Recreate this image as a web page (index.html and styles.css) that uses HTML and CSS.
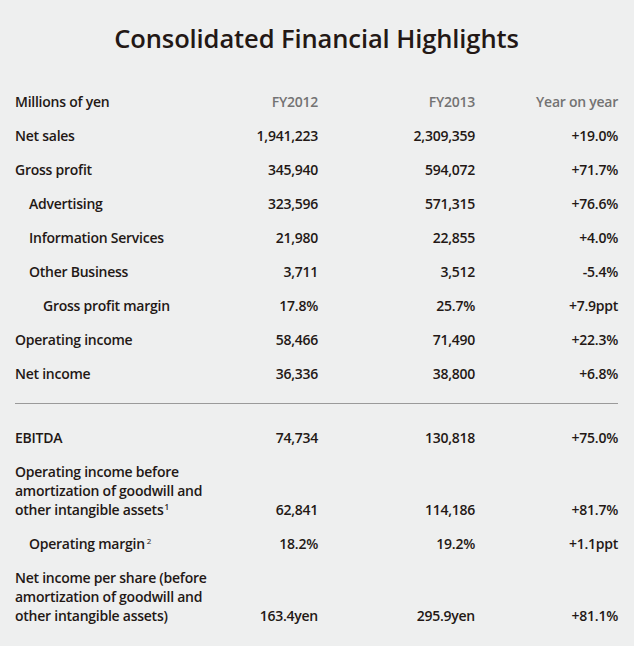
FILE: index.html
```html
<!DOCTYPE html>
<html lang="en">
<head>
<meta charset="utf-8">
<title>Consolidated Financial Highlights</title>
<link rel="stylesheet" href="styles.css">
</head>
<body>
<main class="page">
  <h1 class="title">Consolidated Financial Highlights</h1>
  <div class="table">
    <div class="row head">
      <div class="label">Millions of yen</div>
      <div class="num">FY2012</div>
      <div class="num">FY2013</div>
      <div class="num">Year on year</div>
    </div>
    <div class="row">
      <div class="label">Net sales</div>
      <div class="num">1,941,223</div>
      <div class="num">2,309,359</div>
      <div class="num">+19.0%</div>
    </div>
    <div class="row">
      <div class="label">Gross profit</div>
      <div class="num">345,940</div>
      <div class="num">594,072</div>
      <div class="num">+71.7%</div>
    </div>
    <div class="row">
      <div class="label indent1">Advertising</div>
      <div class="num">323,596</div>
      <div class="num">571,315</div>
      <div class="num">+76.6%</div>
    </div>
    <div class="row">
      <div class="label indent1">Information Services</div>
      <div class="num">21,980</div>
      <div class="num">22,855</div>
      <div class="num">+4.0%</div>
    </div>
    <div class="row">
      <div class="label indent1">Other Business</div>
      <div class="num">3,711</div>
      <div class="num">3,512</div>
      <div class="num">-5.4%</div>
    </div>
    <div class="row">
      <div class="label indent2">Gross profit margin</div>
      <div class="num">17.8%</div>
      <div class="num">25.7%</div>
      <div class="num">+7.9ppt</div>
    </div>
    <div class="row">
      <div class="label">Operating income</div>
      <div class="num">58,466</div>
      <div class="num">71,490</div>
      <div class="num">+22.3%</div>
    </div>
    <div class="row">
      <div class="label">Net income</div>
      <div class="num">36,336</div>
      <div class="num">38,800</div>
      <div class="num">+6.8%</div>
    </div>
    <hr class="divider">
    <div class="row">
      <div class="label">EBITDA</div>
      <div class="num">74,734</div>
      <div class="num">130,818</div>
      <div class="num">+75.0%</div>
    </div>
    <div class="row">
      <div class="label">Operating income before<br>amortization of goodwill and<br>other intangible assets<sup class="note">1</sup></div>
      <div class="num">62,841</div>
      <div class="num">114,186</div>
      <div class="num">+81.7%</div>
    </div>
    <div class="row">
      <div class="label indent1">Operating margin<sup class="note light">2</sup></div>
      <div class="num">18.2%</div>
      <div class="num">19.2%</div>
      <div class="num">+1.1ppt</div>
    </div>
    <div class="row">
      <div class="label">Net income per share (before<br>amortization of goodwill and<br>other intangible assets)</div>
      <div class="num">163.4yen</div>
      <div class="num">295.9yen</div>
      <div class="num">+81.1%</div>
    </div>
  </div>
</main>
</body>
</html>
```

FILE: styles.css
```css
html, body {
  margin: 0;
  padding: 0;
  background: #eeefef;
}
body {
  font-family: "Open Sans", "Noto Sans", sans-serif;
  color: #231815;
  width: 634px;
  height: 646px;
  overflow: hidden;
}
.page {
  padding: 23px 16px 0 15px;
}
.title {
  margin: 0 0 32px;
  text-align: center;
  font-size: 25.5px;
  line-height: 30px;
  font-weight: 600;
  letter-spacing: -0.1px;
}
.table {
  display: flex;
  flex-direction: column;
}
.row {
  display: grid;
  grid-template-columns: 1fr 88px 157px 143px;
  align-items: end;
  padding: 7px 0 8px;
  font-size: 14px;
  line-height: 19px;
  font-weight: 600;
  letter-spacing: -0.25px;
}
.num {
  text-align: right;
}
.head .num {
  color: #737373;
}
.indent1 {
  padding-left: 14px;
}
.indent2 {
  padding-left: 28px;
}
.divider {
  border: 0;
  border-top: 1px solid #9a9a9a;
  margin: 12px 0 17px;
  height: 0;
}
.note {
  font-size: 8px;
  line-height: 0;
  vertical-align: 5px;
  margin-left: 1px;
}
.note.light {
  font-weight: 400;
  margin-left: 2px;
}
```
